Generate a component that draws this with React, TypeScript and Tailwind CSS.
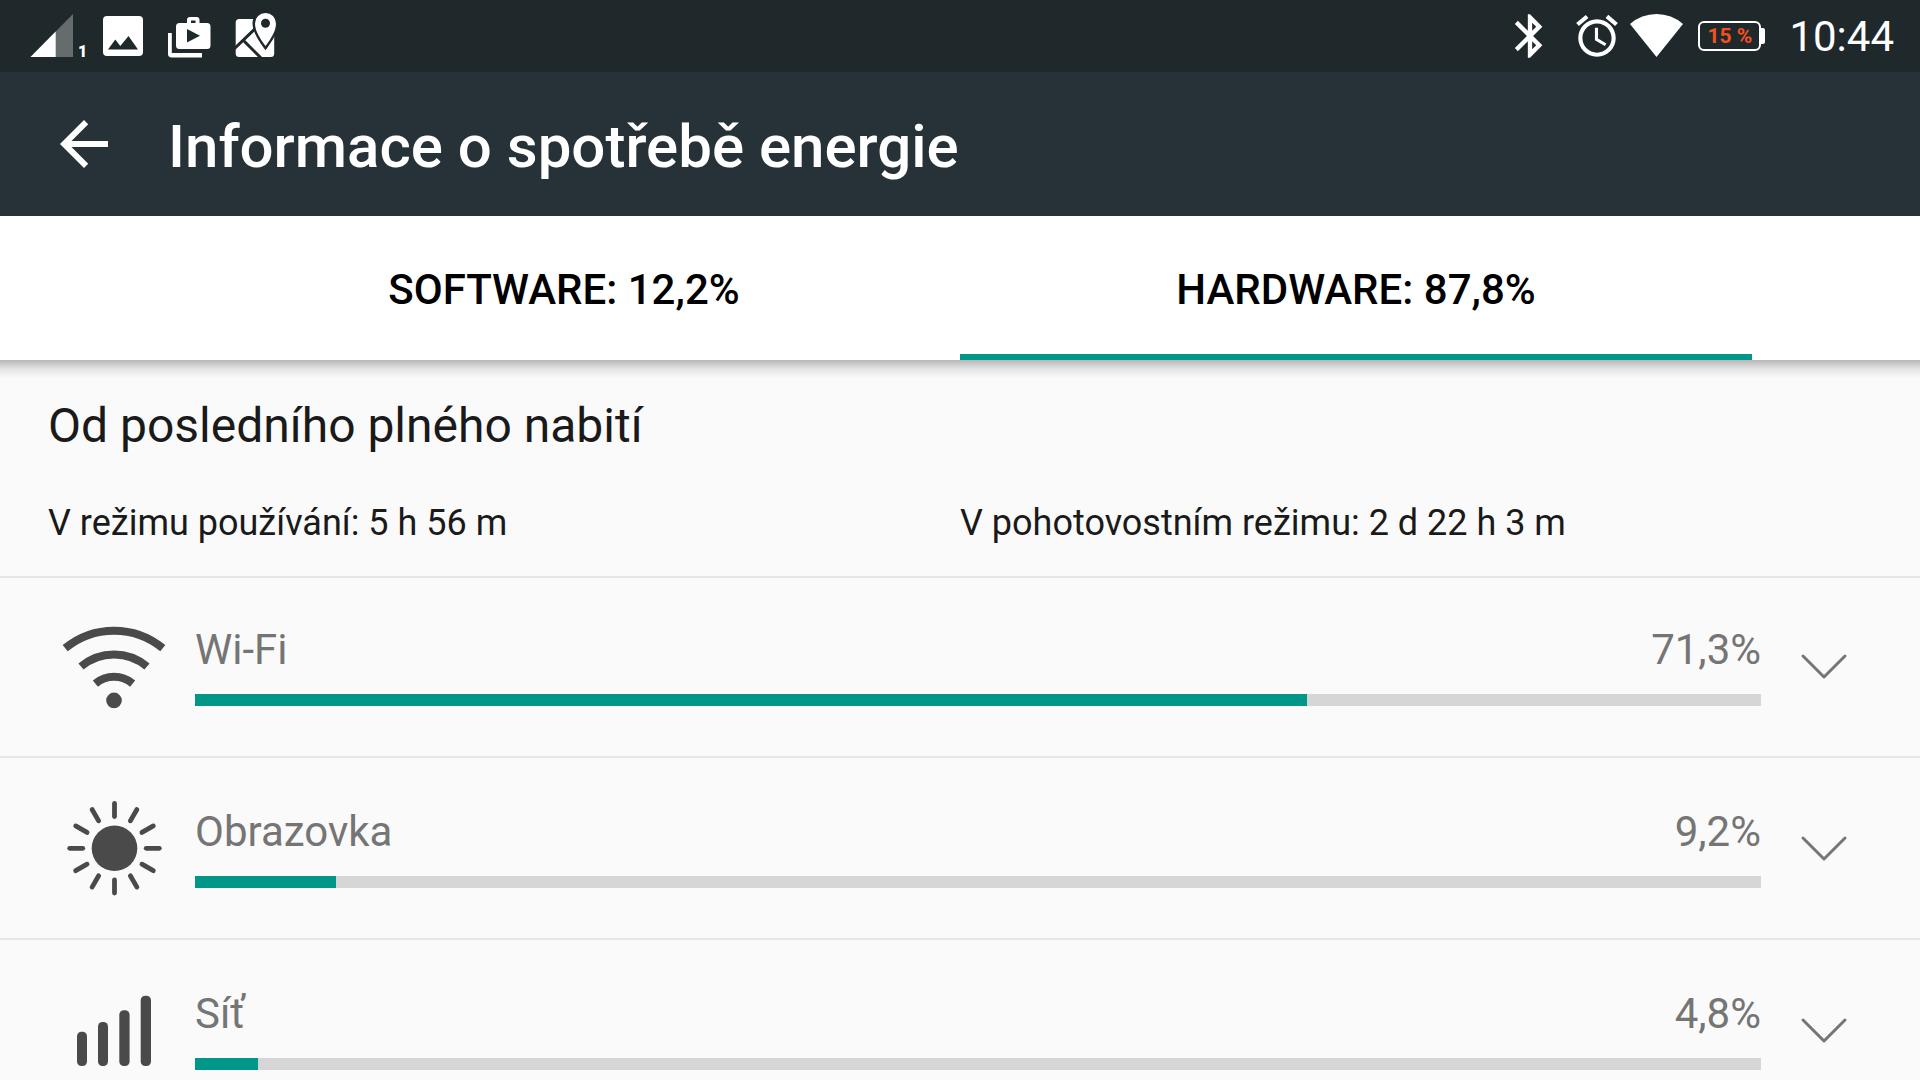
import React, { useState } from "react";

type Usage = { name: string; percent: number; label: string; icon: React.ReactNode };

function WifiIcon() {
  return (
    <svg viewBox="0 0 108 108" className="size-[108px] shrink-0" fill="none" stroke="#4a4a4a" strokeWidth="8" aria-hidden="true">
      <path d="M5.2 36.2A76.7 76.7 0 0 1 102.8 36.2" />
      <path d="M21 54.5A51.4 51.4 0 0 1 87 54.5" />
      <path d="M35.4 71.6A29 29 0 0 1 72.6 71.6" />
      <circle cx="54" cy="88.4" r="7.8" fill="#4a4a4a" stroke="none" />
    </svg>
  );
}

const rayAngles = [0, 30, 60, 90, 120, 150, 180, 210, 240, 270, 300, 330];

function SunIcon() {
  return (
    <svg viewBox="0 0 108 108" className="size-[108px] shrink-0" aria-hidden="true">
      <circle cx="54.5" cy="54.3" r="22.8" fill="#4a4a4a" />
      {rayAngles.map((a) => (
        <line key={a} x1="54.5" y1="9.5" x2="54.5" y2="22.6" stroke="#4a4a4a" strokeWidth="4.8" strokeLinecap="round" transform={`rotate(${a} 54.5 54.3)`} />
      ))}
    </svg>
  );
}

function BarsIcon() {
  return (
    <svg viewBox="0 0 108 108" className="size-[108px] shrink-0" fill="#4a4a4a" aria-hidden="true">
      <rect x="17" y="55.7" width="10" height="34.3" rx="4.5" />
      <rect x="38" y="46" width="10" height="44" rx="4.5" />
      <rect x="59.3" y="34.3" width="10.3" height="55.7" rx="4.5" />
      <rect x="80.7" y="19.7" width="10.3" height="70.3" rx="4.5" />
    </svg>
  );
}

const usages: Usage[] = [
  { name: "Wi-Fi", percent: 71, label: "71,3%", icon: <WifiIcon /> },
  { name: "Obrazovka", percent: 9, label: "9,2%", icon: <SunIcon /> },
  { name: "Síť", percent: 4, label: "4,8%", icon: <BarsIcon /> },
];

function StatusBar() {
  return (
    <div className="flex h-[72px] shrink-0 items-center justify-between bg-[#1f282b] pr-[26px] pl-[30px] text-white">
      <div className="flex items-center gap-4">
        <div className="flex h-12 items-end">
          <svg viewBox="30 12 44 48" className="h-12 w-11" aria-hidden="true">
            <path d="M30.5 57H73V14z" fill="#666b6e" />
            <path d="M30.5 57H55.7V31.5z" fill="#fff" />
          </svg>
          <span className="w-3 pl-1 text-[16px] leading-4 font-black">1</span>
        </div>
        <svg viewBox="102 12 44 48" className="h-12 w-11" aria-hidden="true">
          <rect x="103" y="16" width="40" height="40" rx="4" fill="#fff" />
          <path d="M108 49.5L115.3 39.5L120.3 46L128.5 36L138 49.5z" fill="#1f282b" />
        </svg>
        <svg viewBox="162 12 52 48" className="h-12 w-[52px]" fill="#fff" aria-hidden="true">
          <path d="M168 33H171.8V53H202V57.4H171.5Q168 57.4 168 54z" />
          <path fillRule="evenodd" d="M187 23V20Q187 17 190 17H196.500Q199.500 17 199.500 20V23H207Q210.500 23 210.500 26.500V45.500Q210.500 49 207 49H179.500Q176 49 176 45.500V26.500Q176 23 179.500 23zM191 23H195.500V20.500H191zM187 29V42.500L200 35.800z" />
        </svg>
        <svg viewBox="230 12 50 48" className="h-12 w-[50px]" aria-hidden="true">
          <rect x="235.700" y="19" width="38.500" height="38" rx="3.500" fill="#fff" />
          <path d="M234 49L258 26M244 41L262 59" stroke="#1f282b" strokeWidth="3" fill="none" />
          <path d="M265.500 46C260 38.500 255 31 255 23.500A10.500 10.500 0 0 1 276 23.500C276 31 271 38.500 265.500 46z" fill="#fff" stroke="#1f282b" strokeWidth="5" paintOrder="stroke" />
          <circle cx="265.500" cy="23.300" r="4.500" fill="#1f282b" />
        </svg>
      </div>
      <div className="flex items-center">
        <svg viewBox="0 0 24 24" className="mr-4 size-[52px]" fill="currentColor" aria-hidden="true">
          <path d="M17.710 7.710L12 2h-1v7.590L6.410 5 5 6.410 10.590 12 5 17.590 6.410 19 11 14.410V22h1l5.710-5.710-4.300-4.290 4.300-4.290zM13 5.830l1.880 1.880L13 9.590V5.830zm1.880 10.460L13 18.170v-3.760l1.880 1.880z" />
        </svg>
        <svg viewBox="0 0 24 24" className="mr-1 size-[50px]" fill="currentColor" aria-hidden="true">
          <path d="M22 5.720l-4.600-3.860-1.290 1.530 4.600 3.860L22 5.720zM7.880 3.390L6.600 1.860 2 5.710l1.290 1.530 4.590-3.850zM12.500 8H11v6l4.750 2.850.750-1.230-4-2.370V8zM12 4c-4.970 0-9 4.030-9 9s4.020 9 9 9c4.970 0 9-4.030 9-9s-4.030-9-9-9zm0 16c-3.870 0-7-3.130-7-7s3.130-7 7-7 7 3.130 7 7-3.130 7-7 7z" />
        </svg>
        <svg viewBox="1627 12 60 48" className="mr-3 h-12 w-[60px]" fill="currentColor" aria-hidden="true">
          <path d="M1631 24A40 40 0 0 1 1684 24L1657.500 57z" />
        </svg>
        <div className="flex items-center">
          <div className="flex h-[30px] w-[63px] items-center justify-center rounded-md border-2 border-white text-[21px] leading-6 font-bold text-[#f4511e]">15 %</div>
          <div className="h-4 w-1 rounded-r-xs bg-white" />
        </div>
        <span className="ml-6 pt-0.5 text-[42px] leading-12">10:44</span>
      </div>
    </div>
  );
}

export default function App() {
  const [tab, setTab] = useState("hardware");
  const tabs = [
    { id: "software", label: "SOFTWARE: 12,2%" },
    { id: "hardware", label: "HARDWARE: 87,8%" },
  ];
  return (
    <div className="flex h-screen flex-col overflow-hidden bg-[#fafafa] font-['Roboto',sans-serif] text-[#1a1a1a]">
      <StatusBar />
      <header className="flex h-36 shrink-0 items-center gap-12 bg-[#263238] px-12 text-white">
        <button aria-label="Zpět" className="shrink-0">
          <svg viewBox="0 0 24 24" className="size-[72px]" fill="currentColor" aria-hidden="true">
            <path d="M20 11H7.830l5.590-5.590L12 4l-8 8 8 8 1.410-1.410L7.830 13H20v-2z" />
          </svg>
        </button>
        <h1 className="pt-1.5 text-[60px] leading-[72px] font-medium">Informace o spotřebě energie</h1>
      </header>
      <div className="relative shrink-0 bg-white px-[168px]">
        <div role="tablist" className="flex h-36">
          {tabs.map((t) => (
            <button
              key={t.id}
              role="tab"
              aria-selected={tab === t.id}
              onClick={() => setTab(t.id)}
              className={`flex-1 border-b-6 pt-2.5 text-[42px] leading-12 font-medium text-black ${tab === t.id ? "border-[#009688]" : "border-transparent"}`}
            >
              {t.label}
            </button>
          ))}
        </div>
        <div className="pointer-events-none absolute inset-x-0 top-full h-[18px] bg-linear-to-b from-black/27 via-black/9 to-transparent" />
      </div>
      <main className="flex min-h-0 flex-1 flex-col overflow-hidden">
        <section className="shrink-0 border-b-2 border-[#e6e6e6] px-12 pt-[38px] pb-8">
          <h2 className="text-[48px] leading-14">Od posledního plného nabití</h2>
          <div className="mt-12 grid grid-cols-2 text-[36px] leading-[42px]">
            <p>V režimu používání: 5 h 56 m</p>
            <p>V pohotovostním režimu: 2 d 22 h 3 m</p>
          </div>
        </section>
        <ul className="-mt-0.5 shrink-0">
          {usages.map((u) => (
            <li key={u.name} className="flex h-[182px] items-center border-b-2 border-[#e6e6e6] pr-12 pl-[60px] text-[#757575]">
              {u.icon}
              <div className="ml-[27px] min-w-0 flex-1">
                <div className="flex justify-between text-[42px] leading-12">
                  <span>{u.name}</span>
                  <span>{u.label}</span>
                </div>
                <div role="progressbar" aria-label={u.name} aria-valuenow={u.percent} className="mt-5 h-3 bg-[#d6d6d6]">
                  <div className="h-3 bg-[#009688]" style={{ width: `${u.percent}%` }} />
                </div>
              </div>
              <button aria-label={`Podrobnosti: ${u.name}`} className="ml-[15px] flex size-24 shrink-0 items-center justify-center">
                <svg viewBox="0 0 48 48" className="size-12" fill="none" stroke="currentColor" strokeWidth="3" strokeLinecap="round" strokeLinejoin="round" aria-hidden="true">
                  <path d="M3 14L24 35L45 14" />
                </svg>
              </button>
            </li>
          ))}
        </ul>
      </main>
    </div>
  );
}
